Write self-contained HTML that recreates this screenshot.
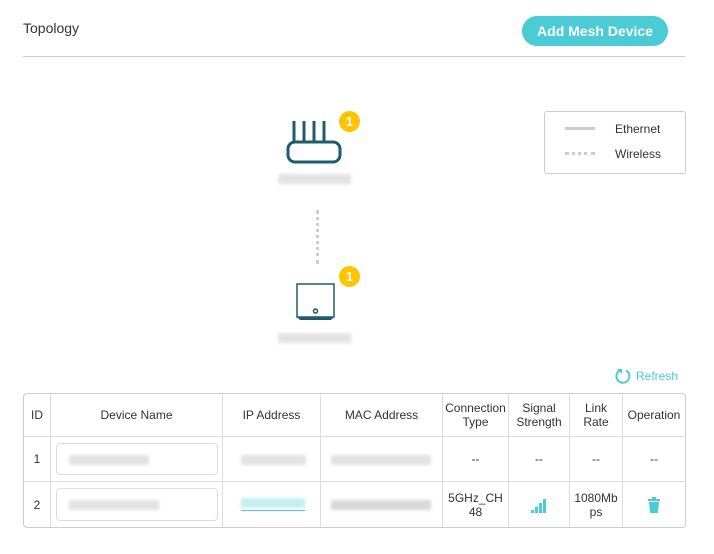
<html><head><style>
body{margin:0;width:714px;height:554px;background:#fff;font-family:"Liberation Sans",sans-serif;color:#333;position:relative;overflow:hidden}
.a{position:absolute}
table{position:absolute;left:23px;top:393px;border-collapse:separate;border-spacing:0;border:1px solid #ccc;border-radius:4px;font-size:12px;text-align:center}
td{border-right:1px solid #ddd;border-bottom:1px solid #ddd;padding:0;line-height:14px}
tr:last-child td{border-bottom:none}td:last-child{border-right:none}
.bl{background:#e2e2e2;height:10px;position:absolute;filter:blur(1.5px)}
.inp{position:absolute;left:5px;right:4px;top:6px;bottom:6px;border:1px solid #ddd;border-radius:4px}
</style></head><body>
<div class="a" style="left:23px;top:20px;font-size:14px;color:#333">Topology</div>
<div class="a" style="left:522px;top:16px;width:146px;height:30px;border-radius:15px;background:#4acbd6;color:#fff;font-weight:bold;font-size:14px;line-height:30px;text-align:center">Add Mesh Device</div>
<div class="a" style="left:23px;top:56px;width:662px;height:1px;background:#ccc"></div>
<div class="a" style="left:544px;top:111px;width:140px;height:61px;border:1px solid #ccc;border-radius:3px;font-size:12px">
<div class="a" style="left:20px;top:15px;width:30px;height:3px;background:#ccc"></div><div class="a" style="left:70px;top:10px">Ethernet</div>
<div class="a" style="left:20px;top:40px;width:30px;border-top:3px dotted #ccc"></div><div class="a" style="left:70px;top:35px">Wireless</div></div>
<svg class="a" style="left:284px;top:118px" width="60" height="50"><g stroke="#1f5c6b" stroke-width="3" fill="none"><path d="M10 3v20M20 3v20M30 3v20M40 3v20"/><rect x="4" y="24" width="52" height="20" rx="7"/></g></svg>
<div class="a" style="left:339px;top:111px;width:21px;height:21px;border-radius:50%;background:#ffc300;color:#fff;font-weight:bold;font-size:13px;line-height:21px;text-align:center">1</div>
<div class="bl" style="left:278px;top:174px;width:73px"></div>
<div class="a" style="left:316px;top:210px;height:54px;border-left:3px dotted #ccc"></div>
<svg class="a" style="left:294px;top:281px" width="44" height="42"><g stroke="#1f5c6b" stroke-width="1.5" fill="none"><path d="M3 3h37v33H3z"/><circle cx="21.5" cy="30" r="2"/></g><path d="M3 36h37l-3 3H6z" fill="#1f5c6b"/></svg>
<div class="a" style="left:339px;top:266px;width:21px;height:21px;border-radius:50%;background:#ffc300;color:#fff;font-weight:bold;font-size:13px;line-height:21px;text-align:center">1</div>
<div class="bl" style="left:278px;top:333px;width:73px"></div>
<svg class="a" style="left:614px;top:367px" width="18" height="18"><path d="M12 3.5A6.5 6.5 0 1 1 5 4" stroke="#4acbd6" stroke-width="2" fill="none"/><path d="M3 2h5v5z" fill="#4acbd6"/></svg>
<div class="a" style="left:636px;top:369px;font-size:12px;color:#4acbd6">Refresh</div>
<table><tr style="height:43px"><td style="width:26px">ID</td><td style="width:171px">Device Name</td><td style="width:97px">IP Address</td><td style="width:121px">MAC Address</td><td style="width:65px">Connection<br>Type</td><td style="width:60px">Signal<br>Strength</td><td style="width:52px">Link<br>Rate</td><td style="width:62px">Operation</td></tr>
<tr style="height:45px"><td>1</td><td style="position:relative"><div class="inp"></div><div class="bl" style="left:18px;top:18px;width:80px"></div></td><td style="position:relative"><div class="bl" style="left:18px;top:18px;width:65px"></div></td><td style="position:relative"><div class="bl" style="left:10px;top:18px;width:100px"></div></td><td>--</td><td>--</td><td>--</td><td>--</td></tr>
<tr style="height:45px"><td>2</td><td style="position:relative"><div class="inp"></div><div class="bl" style="left:18px;top:18px;width:90px"></div></td><td style="position:relative"><div class="bl" style="left:18px;top:16px;width:64px;background:#c5eef0"></div><div class="a" style="left:18px;top:28px;width:64px;height:1px;background:#4acbd6"></div></td><td style="position:relative"><div class="bl" style="left:10px;top:18px;width:100px;background:#d8d8d8"></div></td><td>5GHz_CH<br>48</td><td><svg width="20" height="16"><path d="M2 13h3v3H2zM6 10h3v6H6zM10 6h3v10h-3zM14 2h3v14h-3z" fill="#4acbd6"/></svg></td><td>1080Mb<br>ps</td><td><svg width="14" height="18"><path d="M1 3h12v2H1zM5 1h4v2H5zM2 6h10l-1 11H3z" fill="#4acbd6"/></svg></td></tr></table>
</body></html>
